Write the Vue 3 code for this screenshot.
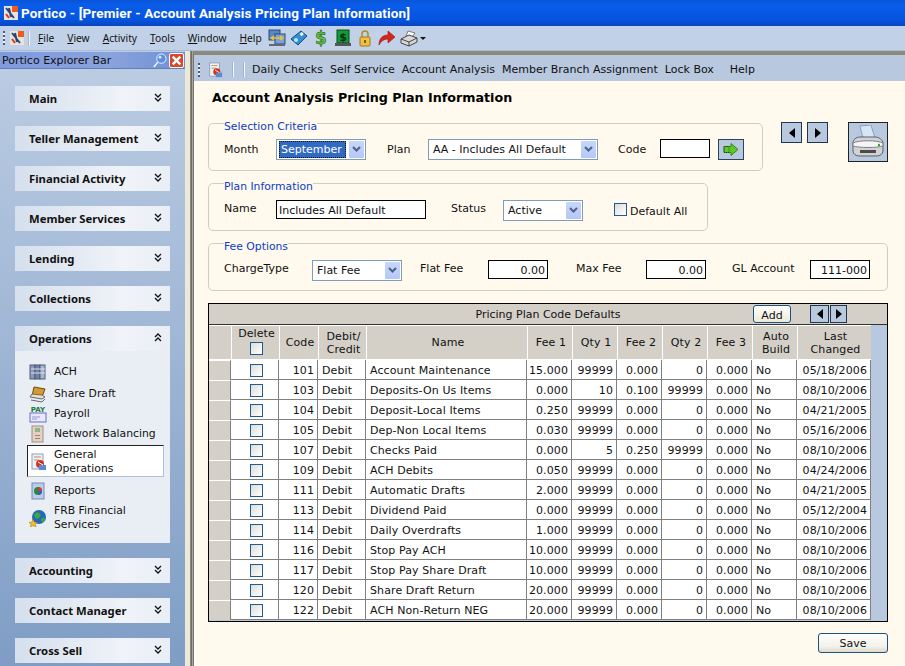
<template>
  <div class="app">
    <header class="titlebar">
      <svg class="logo" viewBox="0 0 16 16"><rect x="1" y="1" width="14" height="14" fill="#e8e4dc"/><rect x="9" y="1" width="6" height="6" fill="#f05a1a"/><path d="M3 3l8 10M6 3l2 9" stroke="#29457a" stroke-width="2"/><path d="M3 9l3 4" stroke="#d83a1c" stroke-width="2"/></svg>
      <span>Portico - [Premier - Account Analysis Pricing Plan Information]</span>
    </header>

    <div class="menubar">
      <i class="grip"></i>
      <svg class="logo" viewBox="0 0 16 16"><rect x="1" y="1" width="14" height="14" fill="#e8e4dc"/><rect x="9" y="1" width="6" height="6" fill="#f05a1a"/><path d="M3 3l8 10M6 3l2 9" stroke="#29457a" stroke-width="2"/><path d="M3 9l3 4" stroke="#d83a1c" stroke-width="2"/></svg>
      <i class="sep"></i>
      <nav class="menus">
        <span v-for="m in menus" :key="m.rest"><u>{{ m.key }}</u>{{ m.rest }}</span>
      </nav>
      <div class="tools">
        <svg viewBox="0 0 18 18"><rect x="1" y="1" width="11" height="10" fill="#5a86c8" stroke="#2b4a80"/><rect x="7" y="5" width="10" height="10" fill="#7aa2d8" stroke="#2b4a80"/><path d="M4 9h10M12 7l3 2-3 2M6 7 3 9l3 2" stroke="#f0c030" stroke-width="1.500" fill="none"/><rect x="1" y="15" width="16" height="2" fill="#667"/></svg>
        <svg viewBox="0 0 18 18"><path d="M1 10 11 2l6 5-9 9z" fill="#2f8fd0" stroke="#14507e"/><circle cx="6" cy="11" r="2" fill="#bfe4f8"/><rect x="10" y="4" width="3" height="3" transform="rotate(-40 11 5)" fill="#fff"/></svg>
        <svg viewBox="0 0 18 18"><text x="9" y="15" text-anchor="middle" class="dollar" fill="#5fc23a" stroke="#14501e" stroke-width=".5">$</text></svg>
        <svg viewBox="0 0 18 18"><rect x="3" y="1" width="12" height="13" fill="#129a3a" stroke="#0a4a1c"/><text x="9" y="12" text-anchor="middle" class="dollar small" fill="#04300f">$</text><rect x="1" y="14" width="16" height="3" fill="#555"/></svg>
        <svg viewBox="0 0 18 18"><path d="M6 8V5a3 3 0 0 1 6 0v3" fill="none" stroke="#b08a2a" stroke-width="1.5"/><rect x="4" y="8" width="10" height="9" rx="1" fill="#f0c040" stroke="#a07818"/><rect x="8" y="11" width="2" height="3" fill="#7a5a10"/></svg>
        <svg viewBox="0 0 18 18"><path d="M1 16C1 9 5 6 10 6V2l7 6-7 6v-4C6 10 3 12 1 16z" fill="#d8261c" stroke="#901410" stroke-width=".6"/></svg>
        <svg viewBox="0 0 18 18"><path d="M8 2l7 2-3 4-6-1z" fill="#fff" stroke="#778"/><path d="M1 10l8-4 8 3v4l-8 4-8-3z" fill="#d8d8d8" stroke="#444"/><path d="M9 17v-4l8-4M1 10l8 3" fill="none" stroke="#444"/></svg>
        <i class="caret"></i>
      </div>
    </div>

    <div class="workspace">
      <aside class="explorer">
        <div class="explorer-head">
          <span>Portico Explorer Bar</span>
          <svg class="pin" viewBox="0 0 16 16"><circle cx="10" cy="6" r="5" fill="#5f8fe0" stroke="#eef4ff"/><circle cx="8.500" cy="4.500" r="1.500" fill="#dbe8ff"/><path d="M6 10l-4 5" stroke="#fff" stroke-width="1.5"/></svg>
          <b class="close">
            <svg viewBox="0 0 12 12"><path d="M2.5 2.5l7 7M9.500 2.500l-7 7" stroke="#fff" stroke-width="2.200"/></svg>
          </b>
        </div>
        <div class="groups">
          <section v-for="g in groups" :key="g" class="group">
            <div class="group-head">
              <span>{{ g }}</span>
              <svg class="chev" :class="{ up: g === 'Operations' }" viewBox="0 0 8 9"><path d="M1 1l3 3 3-3M1 5l3 3 3-3" fill="none" stroke="#111" stroke-width="1.300"/></svg>
            </div>
            <ul v-if="g === 'Operations'" class="group-items">
              <li v-for="item in opsItems" :key="item.label" :class="{ current: item.current }">
                <svg viewBox="0 0 18 18" v-html="item.icon"></svg>
                <span>{{ item.label }}</span>
              </li>
            </ul>
          </section>
        </div>
      </aside>

      <div class="splitter"></div>

      <main class="main">
        <div class="subbar">
          <i class="grip"></i>
          <svg class="subicon" viewBox="0 0 18 18" v-html="generalIcon"></svg>
          <i class="sep"></i>
          <i class="sep"></i>
          <nav class="sublinks">
            <span v-for="l in links" :key="l">{{ l }}</span>
          </nav>
        </div>

        <div class="page">
          <h1>Account Analysis Pricing Plan Information</h1>

          <div class="top-row">
            <fieldset class="box sel-box">
              <legend>Selection Criteria</legend>
              <label class="lbl month">Month</label>
              <div class="combo month-combo focused"><span class="val"><em>September</em></span><b class="drop"><svg viewBox="0 0 9 7"><path d="M1 1l3.500 3.500L8 1" fill="none" stroke="#4d6185" stroke-width="2"/></svg></b></div>
              <label class="lbl plan">Plan</label>
              <div class="combo plan-combo"><span class="val">AA - Includes All Default</span><b class="drop"><svg viewBox="0 0 9 7"><path d="M1 1l3.500 3.500L8 1" fill="none" stroke="#4d6185" stroke-width="2"/></svg></b></div>
              <label class="lbl code">Code</label>
              <input class="field code-field" value="" />
              <button class="go"><svg viewBox="0 0 16 14"><path d="M1 4h7V1l7 6-7 6v-3H1z" fill="#5cc82a" stroke="#2f8a18"/><path d="M1 4v6h5V4z" fill="none" stroke="#222" stroke-width=".7" stroke-dasharray="1 1"/></svg></button>
            </fieldset>
            <div class="pager">
              <button class="tri-btn"><i class="tri left"></i></button>
              <button class="tri-btn"><i class="tri right"></i></button>
            </div>
            <button class="print">
              <svg viewBox="0 0 34 34"><path d="M9 1l11-1 4 13H12z" fill="#d6e6f7" stroke="#8aa2b8"/><path d="M2 18c0-3 3-6 7-6h15c4 0 8 3 8 6v8c0 3-3 5-6 5H8c-3 0-6-2-6-5z" fill="#d2d2d2" stroke="#5a5f6a"/><path d="M2 18c6-3 24-3 30 0v3c-6 2-24 2-30 0z" fill="#f4f4f4" stroke="#7a7f8a"/><path d="M9 25h16v3H9z" fill="#4a4a4a"/><circle cx="28" cy="20" r="1.200" fill="#3aa03a"/></svg>
            </button>
          </div>

          <fieldset class="box plan-box">
            <legend>Plan Information</legend>
            <label class="lbl name">Name</label>
            <input class="field name-field" value="Includes All Default" />
            <label class="lbl status">Status</label>
            <div class="combo status-combo"><span class="val">Active</span><b class="drop"><svg viewBox="0 0 9 7"><path d="M1 1l3.500 3.500L8 1" fill="none" stroke="#4d6185" stroke-width="2"/></svg></b></div>
            <i class="check default-check"></i>
            <span class="lbl default-lbl">Default All</span>
          </fieldset>

          <fieldset class="box fee-box">
            <legend>Fee Options</legend>
            <label class="lbl charge">ChargeType</label>
            <div class="combo charge-combo"><span class="val">Flat Fee</span><b class="drop"><svg viewBox="0 0 9 7"><path d="M1 1l3.500 3.500L8 1" fill="none" stroke="#4d6185" stroke-width="2"/></svg></b></div>
            <label class="lbl flat">Flat Fee</label>
            <input class="field num fee-field" value="0.00" />
            <label class="lbl max">Max Fee</label>
            <input class="field num fee-field" value="0.00" />
            <label class="lbl gl">GL Account</label>
            <input class="field num gl-field" value="111-000" />
          </fieldset>

          <div class="grid">
            <div class="grid-caption">
              <span></span>
              <span class="caption-text">Pricing Plan Code Defaults</span>
              <div class="caption-tools">
                <button class="add">Add</button>
                <div class="mini-pager">
                  <button class="tri-btn mini"><i class="tri left"></i></button>
                  <button class="tri-btn mini"><i class="tri right"></i></button>
                </div>
              </div>
            </div>
            <table>
              <colgroup>
                <col v-for="(w, i) in colWidths" :key="i" :style="{ width: w + 'px' }" />
              </colgroup>
              <thead>
                <tr>
                  <th></th>
                  <th class="del-head">Delete<i class="check"></i></th>
                  <th>Code</th>
                  <th>Debit/<br />Credit</th>
                  <th>Name</th>
                  <th>Fee 1</th>
                  <th>Qty 1</th>
                  <th>Fee 2</th>
                  <th>Qty 2</th>
                  <th>Fee 3</th>
                  <th>Auto<br />Build</th>
                  <th>Last<br />Changed</th>
                </tr>
              </thead>
              <tbody>
                <tr v-for="r in rows" :key="r[0]">
                  <td class="row-head"></td>
                  <td class="ctr"><i class="check"></i></td>
                  <td class="r">{{ r[0] }}</td>
                  <td>Debit</td>
                  <td>{{ r[1] }}</td>
                  <td class="r">{{ r[2] }}</td>
                  <td class="r">{{ r[3] }}</td>
                  <td class="r">{{ r[4] }}</td>
                  <td class="r">{{ r[5] }}</td>
                  <td class="r">0.000</td>
                  <td>No</td>
                  <td class="r">{{ r[6] }}</td>
                </tr>
              </tbody>
            </table>
          </div>

          <div class="actions">
            <button class="save">Save</button>
          </div>
        </div>
      </main>
    </div>
  </div>
</template>

<script setup>
const menus = [
  { key: 'F', rest: 'ile' },
  { key: 'V', rest: 'iew' },
  { key: 'A', rest: 'ctivity' },
  { key: 'T', rest: 'ools' },
  { key: 'W', rest: 'indow' },
  { key: 'H', rest: 'elp' }
]

const groups = [
  'Main', 'Teller Management', 'Financial Activity', 'Member Services', 'Lending',
  'Collections', 'Operations', 'Accounting', 'Contact Manager', 'Cross Sell'
]

const generalIcon = '<rect x="3" y="1" width="11" height="15" fill="#eef2f8" stroke="#8aa0b8"/><path d="M5 4h7M5 7h5" stroke="#c09050"/><circle cx="11" cy="11" r="4" fill="#d8301c"/><rect x="10" y="12" width="7" height="5" fill="#5a8ad0"/><path d="M9 9l5 3" stroke="#fff"/>'

const opsItems = [
  { label: 'ACH', icon: '<rect x="1" y="2" width="5" height="14" fill="#8a9ab8" stroke="#4a5a78"/><rect x="6" y="2" width="5" height="14" fill="#6f84a8" stroke="#4a5a78"/><rect x="11" y="2" width="5" height="14" fill="#a8b8d0" stroke="#4a5a78"/><path d="M2 6h14M2 10h14" stroke="#dde"/>' },
  { label: 'Share Draft', icon: '<path d="M5 2l11 2-3 8-10-1z" fill="#d89a30" stroke="#6a4a10"/><path d="M1 12l12 2 3-2-3-2-10-1z" fill="#e8e0c0" stroke="#667"/><path d="M2 15l11 2 3-3" fill="none" stroke="#667"/>' },
  { label: 'Payroll', icon: '<rect x="1" y="8" width="16" height="9" fill="#e8e8ff" stroke="#6a6ad0"/><path d="M3 12h8M3 14h5" stroke="#99c"/><text x="9" y="7" text-anchor="middle" font-size="7" font-weight="700" font-family="DejaVu Sans" fill="#1a7a3a">PAY</text>' },
  { label: 'Network Balancing', icon: '<rect x="3" y="1" width="11" height="16" fill="#e8d0c0" stroke="#a09080"/><rect x="6" y="3" width="5" height="4" fill="#8ab88a"/><rect x="6" y="10" width="5" height="1" fill="#888"/><rect x="6" y="13" width="5" height="1" fill="#888"/>' },
  { label: 'General Operations', icon: generalIcon, current: true },
  { label: 'Reports', icon: '<rect x="3" y="1" width="12" height="16" fill="#b8cdf0" stroke="#7a8ab0"/><circle cx="9" cy="9" r="4" fill="#2a8a3a"/><path d="M9 9V5a4 4 0 0 1 4 4z" fill="#d83a2a"/><path d="M9 9h4a4 4 0 0 1-3 4z" fill="#3a5ad0"/>' },
  { label: 'FRB Financial Services', icon: '<circle cx="10" cy="8" r="7" fill="#2266c0"/><path d="M5 5l4-2 3 3-3 4-3-1zM12 10l3-2 1 3-3 3z" fill="#3ea83a"/><path d="M4 10l1.500 3 3 .5-2 2 .5 2.500-3-1.500-2.500 1.500.5-3-2-1.500 3-.5z" fill="#f0c020" stroke="#806010" stroke-width=".4"/>' }
]

const links = ['Daily Checks', 'Self Service', 'Account Analysis', 'Member Branch Assignment', 'Lock Box', 'Help']

const colWidths = [22, 48, 39, 48, 161, 45, 45, 45, 45, 45, 45, 74]

const rows = [
  ['101', 'Account Maintenance', '15.000', '99999', '0.000', '0', '05/18/2006'],
  ['103', 'Deposits-On Us Items', '0.000', '10', '0.100', '99999', '08/10/2006'],
  ['104', 'Deposit-Local Items', '0.250', '99999', '0.000', '0', '04/21/2005'],
  ['105', 'Dep-Non Local Items', '0.030', '99999', '0.000', '0', '05/16/2006'],
  ['107', 'Checks Paid', '0.000', '5', '0.250', '99999', '08/10/2006'],
  ['109', 'ACH Debits', '0.050', '99999', '0.000', '0', '04/24/2006'],
  ['111', 'Automatic Drafts', '2.000', '99999', '0.000', '0', '04/21/2005'],
  ['113', 'Dividend Paid', '0.000', '99999', '0.000', '0', '05/12/2004'],
  ['114', 'Daily Overdrafts', '1.000', '99999', '0.000', '0', '08/10/2006'],
  ['116', 'Stop Pay ACH', '10.000', '99999', '0.000', '0', '08/10/2006'],
  ['117', 'Stop Pay Share Draft', '10.000', '99999', '0.000', '0', '08/10/2006'],
  ['120', 'Share Draft Return', '20.000', '99999', '0.000', '0', '08/10/2006'],
  ['122', 'ACH Non-Return NEG', '20.000', '99999', '0.000', '0', '08/10/2006']
]
</script>

<style>
html, body { margin: 0; padding: 0; overflow: hidden; }
</style>

<style scoped>
* { box-sizing: border-box; }
.app {
  width: 905px; height: 666px; display: flex; flex-direction: column; overflow: hidden;
  font-family: "DejaVu Sans", Verdana, sans-serif; font-size: 11px; color: #111;
  background: #b9cbe2;
}

/* title + menu */
.titlebar {
  height: 26px; display: flex; align-items: center; gap: 2px; padding-left: 3px;
  background: linear-gradient(#0a55d8 0, #0a5cea 20%, #0554e0 75%, #0846c0 100%);
  color: #fff; font: 700 13.500px Roboto, sans-serif; letter-spacing: .13px;
}
.logo { width: 16px; height: 16px; flex: none; }
.menubar {
  height: 25px; display: flex; align-items: center; padding-left: 3px;
  background: #c1d2e8; border-bottom: 1px solid #a9bdd8;
}
.grip { width: 2px; height: 14px; margin-right: 4px; flex: none; background: repeating-linear-gradient(#4a5a78 0 2px, #eef 2px 4px); }
.sep { width: 1px; height: 15px; margin: 0 6px 0 4px; flex: none; background: #f4f8fd; box-shadow: -1px 0 #a0b4d0; }
.menus { display: flex; gap: 13px; margin-left: 2px; font: 10.200px "Noto Sans", sans-serif; }
.tools { display: flex; align-items: center; gap: 4px; margin-left: 6px; }
.tools svg { width: 18px; height: 18px; }
.dollar { font-size: 17px; font-weight: 700; font-family: "DejaVu Sans", sans-serif; }
.dollar.small { font-size: 11px; }
.caret { width: 0; height: 0; border: 3px solid transparent; border-top: 3px solid #111; margin: 3px 0 0 -2px; }

.workspace { flex: 1; display: flex; min-height: 0; }

/* explorer */
.explorer { width: 185px; flex: none; display: flex; flex-direction: column; background: linear-gradient(#bccde3, #7f9dc5); }
.explorer-head {
  height: 17px; margin-top: 1px; display: flex; align-items: center; padding-left: 2px; gap: 2px;
  background: linear-gradient(90deg, #7f9ade, #89a3dc 60%, #6f8ed4); border-bottom: 1px solid #5f7fc0; font-size: 11px;
}
.explorer-head span { flex: 1; }
.pin { width: 15px; height: 15px; }
.close { width: 15px; height: 15px; border-radius: 2px; background: #d8482c; border: 1px solid #fff; display: flex; margin-right: 1px; }
.close svg { width: 100%; height: 100%; }
.groups { display: flex; flex-direction: column; gap: 15px; padding: 17px 15px 0; }
.group { width: 155px; }
.group-head {
  height: 25px; display: flex; align-items: center; justify-content: space-between; padding: 0 8px 0 14px;
  background: linear-gradient(90deg, #d5dfed, #f0f3f8 70%, #e9eef6); font: 700 11.300px "Noto Sans", sans-serif;
}
.chev { width: 8px; height: 9px; margin-top: -2px; }
.chev.up { transform: scaleY(-1); }
.group-items { margin: 0; padding: 11px 6px 0 13px; list-style: none; background: #e9eef4; height: 192px; }
.group-items li { display: flex; align-items: center; gap: 7px; min-height: 20px; padding: 0 0 0 1px; font-size: 10.800px; line-height: 14px; }
.group-items li:first-child { margin-bottom: 2px; }
.group-items li:last-child { min-height: 34px; }
.group-items li svg { width: 18px; height: 18px; flex: none; }
.group-items li.current { background: #fff; border: 1px solid; border-color: #222 #b0c0d8 #b0c0d8 #222; margin: 1px 0 4px -1px; height: 32px; padding-top: 1px; }
.group-items li span { max-width: 106px; }
.group-items li.current span { max-width: 72px; }

.splitter { width: 8px; flex: none; background: linear-gradient(90deg, #ece9d8 0 5px, #8a887c 5px 6px, #6f6e64 6px 7px, #a8a69a 7px 8px); }

/* main */
.main { flex: 1; min-width: 0; display: flex; flex-direction: column; background: #fffaed; }
.subbar {
  height: 30px; display: flex; align-items: center; padding: 3px 0 0 4px;
  background: #b7c8df; border-top: 4px solid #8c8a7d; border-left: 1px solid #777;
}
.subicon { width: 16px; height: 16px; margin: 0 6px 0 3px; flex: none; }
.sublinks { display: flex; gap: 7px; margin-left: 1px; font-size: 11px; white-space: nowrap; }
.sublinks span:last-child { margin-left: 9px; }
.page { flex: 1; padding: 8px 17px 0 14px; border-left: 1px solid #777; min-height: 0; }
h1 { margin: 0 0 8px 4px; font-size: 12.700px; line-height: 17px; font-weight: 700; color: #000; }

.top-row { display: flex; align-items: flex-start; }
.box {
  margin: 0; padding: 0 0 0 15px; border: 1px solid #d0cebd; border-radius: 5px; height: 57px;
  display: flex; align-items: flex-start; min-width: 0;
}
/* legend text sits a little under the border line */
.box legend { padding: 6px 0 0; margin-left: 0; color: #0a3cc8; font-size: 10.800px; line-height: 13px; }
.lbl { white-space: nowrap; font-size: 11px; line-height: 19px; }
.sel-box { width: 556px; }
.plan-box { width: 500px; margin-top: 3px; }
.fee-box { width: 680px; margin-top: 3px; }
.sel-box > *:not(legend) { margin-top: 6px; }
.plan-box > *:not(legend), .fee-box > *:not(legend) { margin-top: 7px; }
.sel-box .lbl { padding-top: 1px; }
.plan-box .lbl, .fee-box .lbl { line-height: 17px; }

.combo { height: 21px; display: flex; align-items: center; border: 1px solid #7f9db9; background: #fff; padding: 1px; }
.combo .val { flex: 1; padding-left: 3px; white-space: nowrap; overflow: hidden; }
.combo.focused .val { padding-left: 1px; }
.combo em { font-style: normal; background: #316ac5; color: #fff; outline: 1px dotted #111; outline-offset: -1px; display: block; padding: 2px; width: 67px; height: 17px; line-height: 13px; }
.drop { width: 15px; height: 17px; flex: none; background: linear-gradient(#c8d6fb, #b4c7f6); display: flex; align-items: center; justify-content: center; border-radius: 1px; }
.drop svg { width: 9px; height: 7px; }
.field { height: 19px; border: 1px solid #000; background: #fff; font: inherit; padding: 2px 2px 0; color: #111; }
.num { text-align: right; }

.month { width: 52px; }
.month-combo { width: 90px; }
.plan { margin-left: 21px; width: 41px; }
.plan-combo { width: 170px; }
.code { margin-left: 20px; width: 42px; }
.code-field { width: 50px; }
.go { width: 26px; height: 21px; margin-left: 8px; padding: 0 4px; border: 1px solid #2a4560; background: #b7c8df; }
.go svg { width: 100%; height: 100%; display: block; }

.pager { display: flex; gap: 5px; margin: 8px 0 0 18px; }
.tri-btn { width: 21px; height: 21px; padding: 0; border: 1px solid #1f3550; background: #b7c8df; display: flex; align-items: center; justify-content: center; }
.tri { width: 0; height: 0; border: 5px solid transparent; }
.tri.left { border-right: 6px solid #000; border-left: 0; }
.tri.right { border-left: 6px solid #000; border-right: 0; }
.print { width: 40px; height: 40px; margin: 8px 0 0 20px; padding: 2px; border: 1px solid #222; background: #b7c8df; }
.print svg { width: 100%; height: 100%; display: block; }

.name { width: 52px; }
.name-field { width: 150px; }
.status { margin-left: 25px; width: 52px; }
.status-combo { width: 80px; }
.default-check.default-check { margin: 10px 0 0 31px; }
.plan-box .default-lbl { margin-left: 3px; line-height: 20px; padding-top: 2px; }
.check { display: block; width: 13px; height: 13px; border: 1px solid #1f5a90; background: linear-gradient(135deg, #dcdcd7, #fff); }

.charge { width: 88px; }
.charge-combo { width: 90px; }
.flat { margin-left: 18px; width: 68px; }
.fee-field { width: 60px; }
.max { margin-left: 28px; width: 70px; }
.gl { margin-left: 26px; width: 78px; }
.gl-field { width: 60px; }

/* grid */
.grid { width: 680px; margin-top: 12px; height: 319px; border: 1px solid #000; background: #b7c8df; }
.grid-caption { height: 21px; display: grid; grid-template-columns: 1fr auto 1fr; align-items: center; background: #d4d0c8; border-bottom: 1px solid #333; }
.caption-text { font-size: 11px; }
.caption-tools { display: flex; align-items: center; justify-content: flex-end; padding-right: 40px; }
.add { width: 38px; height: 18px; padding: 2px 0 0; border: 1px solid #1c5180; border-radius: 3px; background: linear-gradient(#fff, #ece9d8); font: inherit; color: #111; margin-right: 19px; }
.mini-pager { display: flex; gap: 1px; }
.tri-btn.mini { width: 19px; height: 18px; }
.tri-btn.mini:last-child { width: 17px; }
table { border-collapse: separate; border-spacing: 0; table-layout: fixed; width: 662px; font-size: 11px; letter-spacing: .1px; }
th { height: 35px; background: #d4d0c8; font-weight: 400; text-align: center; line-height: 13px; padding: 0 0 0 2px; border-top: 1px solid #fff; border-left: 1px solid #fff; border-bottom: 1px solid #fff; }
th:first-child { border-left: 0; }
td { height: 20px; padding: 1px 3px 0 4px; background: #fff; border-right: 1px solid #808080; border-bottom: 1px solid #808080; white-space: nowrap; overflow: hidden; }
td.r { text-align: right; padding-left: 0; }
td.row-head { background: #d4d0c8; border-top: 1px solid #fff; border-bottom: 0; border-right: 1px solid #808080; padding: 0; }
td.ctr { padding: 2px 0 0 4px; }
td.ctr .check { margin: 0 auto; }
.del-head { vertical-align: top; line-height: 15px; }
.del-head .check { margin: 1px auto 0; }

.actions { display: flex; justify-content: flex-end; width: 680px; margin-top: 11px; }
.save { width: 70px; height: 20px; padding: 0; border: 1px solid #1c5180; border-radius: 3px; background: linear-gradient(#fff, #f2f1ea 70%, #dcd9cc); font: inherit; color: #111; }
</style>
